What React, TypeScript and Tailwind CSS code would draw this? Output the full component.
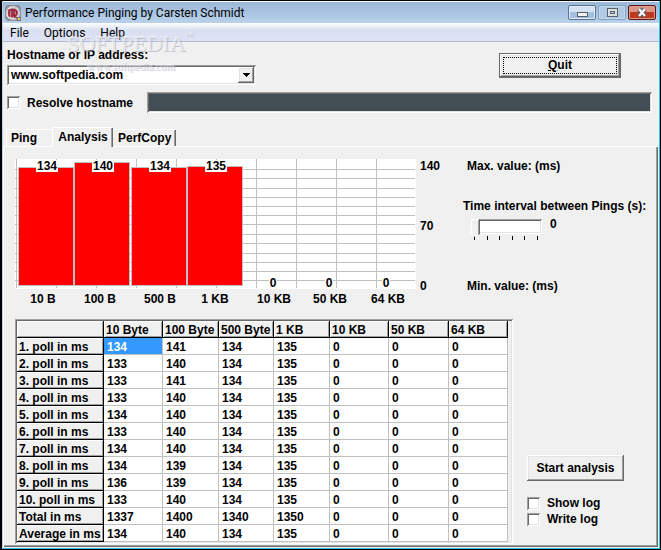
import React, { useState } from 'react';

const SUNKEN = 'shadow-[inset_1px_1px_#a0a0a0,inset_-1px_-1px_#fff,inset_2px_2px_#696969,inset_-2px_-2px_#e3e3e3]';
const RAISED = 'shadow-[inset_-1px_-1px_#696969,inset_1px_1px_#fff,inset_-2px_-2px_#a0a0a0,inset_2px_2px_#e3e3e3]';

const COLUMNS = ['10 Byte', '100 Byte', '500 Byte', '1 KB', '10 KB', '50 KB', '64 KB'];

const ROWS = [
  { label: '1. poll in ms', values: [134, 141, 134, 135, 0, 0, 0] },
  { label: '2. poll in ms', values: [133, 140, 134, 135, 0, 0, 0] },
  { label: '3. poll in ms', values: [133, 141, 134, 135, 0, 0, 0] },
  { label: '4. poll in ms', values: [133, 140, 134, 135, 0, 0, 0] },
  { label: '5. poll in ms', values: [134, 140, 134, 135, 0, 0, 0] },
  { label: '6. poll in ms', values: [133, 140, 134, 135, 0, 0, 0] },
  { label: '7. poll in ms', values: [134, 140, 134, 135, 0, 0, 0] },
  { label: '8. poll in ms', values: [134, 139, 134, 135, 0, 0, 0] },
  { label: '9. poll in ms', values: [136, 139, 134, 135, 0, 0, 0] },
  { label: '10. poll in ms', values: [133, 140, 134, 135, 0, 0, 0] },
  { label: 'Total in ms', values: [1337, 1400, 1340, 1350, 0, 0, 0] },
  { label: 'Average in ms', values: [134, 140, 134, 135, 0, 0, 0] },
];

const BARS = [
  { x: 3, top: 8, value: 134, valueX: 32, label: '10 B', labelX: 28 },
  { x: 59, top: 3, value: 140, valueX: 88, label: '100 B', labelX: 85 },
  { x: 116, top: 8, value: 134, valueX: 145, label: '500 B', labelX: 145 },
  { x: 172, top: 7, value: 135, valueX: 201, label: '1 KB', labelX: 200 },
  { x: 0, top: 0, value: 0, valueX: 258, label: '10 KB', labelX: 259 },
  { x: 0, top: 0, value: 0, valueX: 314, label: '50 KB', labelX: 315 },
  { x: 0, top: 0, value: 0, valueX: 371, label: '64 KB', labelX: 373 },
];

const GRID_X = [1, 41, 81, 121, 161, 201, 241, 281, 321, 361];
const GRID_Y = [10, 19, 29, 38, 47, 56, 65, 75, 84, 94, 103, 112, 121];

const AppIcon: React.FC = () => (
  <svg width="16" height="16" viewBox="0 0 16 16" className="shrink-0" aria-hidden="true">
    <rect width="16" height="16" rx="4" fill="#8d8f9a" />
    <circle cx="8" cy="8" r="7" fill="#d5d3d3" />
    <circle cx="8" cy="8" r="5" fill="#ad8b91" />
    <path d="M4 12V5h5q3 0 3 3t-3 2H7M7 4v8M9 5v6l3 2" fill="none" stroke="#a41c35" strokeWidth="1.5" />
    <path d="M3 4l3-2M2 10l2 3" stroke="#fff" strokeWidth="1" />
    <rect x="12" y="12" width="4" height="4" fill="#727680" />
    <rect x="13" y="13" width="2" height="2" fill="#eadc3c" />
  </svg>
);

const TitleBar: React.FC = () => (
  <header className="flex h-[22px] items-center bg-linear-to-b from-[#9bb8d8] to-[#b9d1ea] border-t border-white pl-0.5 pr-[3px]">
    <AppIcon />
    <h1 className="ml-1 grow pt-px font-[Roboto,'Noto_Sans',sans-serif] text-xs leading-4 text-black whitespace-nowrap">
      Performance Pinging by Carsten Schmidt
    </h1>
    <div className="flex gap-0.5">
      <button aria-label="Minimize" className="flex h-[15px] w-7 items-center justify-center rounded-[2px] border border-[#5b7392] bg-linear-to-b from-[#d3e1f2] from-50% to-[#a4bfdd] to-50% shadow-[inset_0_0_0_1px_#e0ecf8]">
        <svg width="12" height="11" viewBox="0 0 12 11" shapeRendering="crispEdges" aria-hidden="true">
          <rect x="1" y="5" width="11" height="5" fill="#565d6b" />
          <rect x="2" y="6" width="9" height="3" fill="#f3f3f3" />
        </svg>
      </button>
      <button aria-label="Maximize" className="flex h-[15px] w-7 items-center justify-center rounded-[2px] border border-[#86a1bf] bg-[#b0cae4] shadow-[inset_0_0_0_1px_#c3d8ed]">
        <svg width="12" height="11" viewBox="0 0 12 11" shapeRendering="crispEdges" aria-hidden="true">
          <rect x="1" y="1" width="11" height="9" fill="#59616f" />
          <rect x="2" y="2" width="9" height="7" fill="#dedede" />
          <rect x="4" y="4" width="5" height="3" fill="#59616f" />
          <rect x="5" y="5" width="3" height="1" fill="#b0cae4" />
        </svg>
      </button>
      <button aria-label="Close" className="flex h-[15px] w-7 items-center justify-center rounded-[2px] border border-[#5a1717] bg-linear-to-b from-[#dc9686] from-50% to-[#bd3a21] to-50% shadow-[inset_0_0_0_1px_#dd9c8d]">
        <svg width="12" height="11" viewBox="0 0 12 11" aria-hidden="true">
          <path d="M3 2l6 7M9 2L3 9" stroke="#545765" strokeWidth="4.4" />
          <path d="M3 2l6 7M9 2L3 9" stroke="#f7f7f7" strokeWidth="2.4" />
        </svg>
      </button>
    </div>
  </header>
);

const MenuBar: React.FC = () => (
  <nav className="flex h-[19px] items-end gap-[15px] border-b border-[#b2b8d2] bg-linear-to-b from-white via-[#d9dff0] via-40% to-[#dde3f5] pl-[7px] font-[Roboto,'Noto_Sans',sans-serif] text-xs leading-4">
    <button className="h-4">File</button>
    <button className="h-4">Options</button>
    <button className="h-4">Help</button>
  </nav>
);

const Watermark: React.FC = () => (
  <div aria-hidden="true" className="pointer-events-none absolute left-[67px] top-8 text-[#e2e3e8] opacity-60 [text-shadow:1px_1px_#a5a8b0,-1px_-1px_#f8f8fc]">
    <div className="flex items-start font-['Liberation_Serif',serif] leading-6">
      <span className="text-[22px]">SOFTPEDIA</span>
      <span className="text-[8px] leading-2">™</span>
    </div>
    <div className="pl-5 pt-0.5 font-['Liberation_Serif',serif] text-[11px] leading-4">www.softpedia.com</div>
  </div>
);

const CheckBox: React.FC<{ id: string; label: string }> = ({ id, label }) => {
  const [checked, setChecked] = useState(false);

  return (
    <div className="flex h-4 items-center">
      <input
        id={id}
        type="checkbox"
        checked={checked}
        onChange={e => setChecked(e.target.checked)}
        className={`size-[13px] shrink-0 appearance-none bg-white checked:bg-gray-500 ${SUNKEN}`}
      />
      <label htmlFor={id} className="pl-[7px] whitespace-nowrap">{label}</label>
    </div>
  );
};

const PollChart: React.FC = () => (
  <svg width="401" height="150" viewBox="0 0 401 150" className="shrink-0" role="img" aria-label="Average response by packet size">
    <g shapeRendering="crispEdges">
      <rect width="401" height="130" fill="#fff" />
      {GRID_X.map(x => <rect key={x} x={x} y="0" width="1" height="129" fill="#c0c0c0" />)}
      {GRID_Y.map(y => <rect key={y} x="0" y={y} width="400" height="1" fill="#c0c0c0" />)}
      {BARS.filter(bar => bar.value > 0).map(bar => (
        <g key={bar.label}>
          <rect x={bar.x} y={bar.top} width="56" height={127 - bar.top} fill="#c0c0c0" />
          <rect x={bar.x + 1} y={bar.top + 1} width="54" height={125 - bar.top} fill="#f00" />
        </g>
      ))}
      {BARS.map(bar => (
        <rect
          key={bar.label}
          x={bar.value ? bar.valueX - 11 : bar.valueX - 4}
          y={bar.value ? 1 : 118}
          width={bar.value ? 22 : 8}
          height={bar.value ? 12 : 11}
          fill="#fff"
        />
      ))}
    </g>
    <g textAnchor="middle" fill="#000">
      {BARS.map(bar => (
        <React.Fragment key={bar.label}>
          <text x={bar.valueX} y={bar.value ? 11 : 128}>{bar.value}</text>
          <text x={bar.labelX} y="144">{bar.label}</text>
        </React.Fragment>
      ))}
    </g>
  </svg>
);

const IntervalSlider: React.FC = () => {
  const [seconds, setSeconds] = useState(0);

  return (
    <div className="flex flex-col">
      <label htmlFor="interval" className="-ml-1 whitespace-nowrap">Time interval between Pings (s):</label>
      <div className="flex pl-1 pt-[3px]">
        <div className="w-[71px]">
          <input
            id="interval"
            type="range"
            min="0"
            max="5"
            value={seconds}
            onChange={e => setSeconds(Number(e.target.value))}
            className="block h-5 w-full appearance-none bg-transparent [&::-webkit-slider-runnable-track]:h-[15px] [&::-webkit-slider-runnable-track]:bg-white [&::-webkit-slider-runnable-track]:shadow-[inset_1px_1px_#a0a0a0,inset_-1px_-1px_#fff,inset_2px_2px_#696969,inset_-2px_-2px_#e3e3e3] [&::-webkit-slider-thumb]:h-[19px] [&::-webkit-slider-thumb]:w-[9px] [&::-webkit-slider-thumb]:appearance-none [&::-webkit-slider-thumb]:bg-[#f0f0f0] [&::-webkit-slider-thumb]:shadow-[inset_-1px_0_#696969,inset_1px_1px_#fff,inset_-2px_0_#a0a0a0] [&::-webkit-slider-thumb]:[clip-path:polygon(0_0,100%_0,100%_80%,50%_100%,0_80%)]"
          />
          <div className="flex justify-between pl-[3px] pr-1">
            {[0, 1, 2, 3, 4, 5].map(tick => <span key={tick} className="h-1 w-px bg-black" />)}
          </div>
        </div>
        <output htmlFor="interval" className="pl-2 pt-px">{seconds}</output>
      </div>
    </div>
  );
};

const ResultTable: React.FC = () => (
  <div className={`shrink-0 bg-[#f0f0f0] py-0.5 pl-0.5 pr-[5px] ${SUNKEN}`}>
    <table className="table-fixed w-[491px] border-separate border-spacing-0 bg-white text-left">
      <colgroup>
        <col className="w-[87px]" />
        <col className="w-[59px]" />
        <col className="w-[56px]" />
        <col className="w-[55px]" />
        <col className="w-[56px]" />
        <col className="w-[59px]" />
        <col className="w-[60px]" />
        <col className="w-[59px]" />
      </colgroup>
      <thead>
        <tr>
          <td className="h-[17px] border-b border-r border-black bg-[#f0f0f0] shadow-[inset_1px_1px_#fff,inset_-1px_-1px_#a0a0a0]" />
          {COLUMNS.map(column => (
            <th key={column} scope="col" className="h-[17px] border-b border-r border-black bg-[#f0f0f0] p-0 pl-0.5 pt-0.5 leading-[14px] whitespace-nowrap shadow-[inset_1px_1px_#fff,inset_-1px_-1px_#a0a0a0]">
              {column}
            </th>
          ))}
        </tr>
      </thead>
      <tbody>
        {ROWS.map((row, rowIndex) => (
          <tr key={row.label}>
            <th scope="row" className="h-[17px] border-b border-r border-black bg-[#f0f0f0] p-0 pl-0.5 pt-0.5 leading-[14px] whitespace-nowrap shadow-[inset_1px_1px_#fff,inset_-1px_-1px_#a0a0a0]">
              {row.label}
            </th>
            {row.values.map((value, index) => (
              <td
                key={COLUMNS[index]}
                className={`h-[17px] border-b border-r border-[#c0c0c0] p-0 pl-[3px] pt-0.5 leading-[14px] ${rowIndex === 0 && index === 0 ? 'bg-[#3399ff] text-white' : ''}`}
              >
                {value}
              </td>
            ))}
          </tr>
        ))}
      </tbody>
    </table>
  </div>
);

const App: React.FC = () => {
  const [host, setHost] = useState('www.softpedia.com');

  return (
    <div className="relative flex min-h-screen flex-col bg-black pb-px pl-0.5 pr-px pt-px">
      <div className="flex grow flex-col border-b border-l border-r border-b-[#2cc4e4] border-l-[#b9d1ea] border-r-[#2cc4e4] bg-[#f0f0f0] font-['Liberation_Sans',Arial,sans-serif] text-xs font-bold leading-4 text-black">
        <div className="font-normal">
          <TitleBar />
          <MenuBar />
        </div>

        <div className="flex items-start justify-between pl-1 pr-[38px] pt-[5px]">
          <div className="flex flex-col gap-0.5">
            <label htmlFor="host" className="h-4">Hostname or IP address:</label>
            <div className="relative w-[249px]">
              <select
                id="host"
                value={host}
                onChange={e => setHost(e.target.value)}
                className={`block h-5 w-full appearance-none bg-white pl-1 pr-5 leading-4 ${SUNKEN}`}
              >
                <option>www.softpedia.com</option>
              </select>
              <span className={`pointer-events-none absolute right-0.5 top-0.5 flex h-4 w-4 items-center justify-center bg-[#f0f0f0] ${RAISED}`}>
                <svg width="7" height="4" viewBox="0 0 7 4" shapeRendering="crispEdges" aria-hidden="true">
                  <path d="M0 0h7v1H0zM1 1h5v1H1zM2 2h3v1H2zM3 3h1v1H3z" />
                </svg>
              </span>
            </div>
          </div>
          <button className="mt-[6px] h-[25px] w-[122px] border border-[#696969] p-[3px] shadow-[inset_-1px_-1px_#696969,inset_1px_1px_#fff,inset_-2px_-2px_#a0a0a0,inset_2px_2px_#e3e3e3]">
            <span className="block h-full border border-dotted border-black leading-[15px]"><u>Q</u>uit</span>
          </button>
        </div>

        <div className="flex items-center gap-[14px] pl-1 pr-[7px] pt-[7px]">
          <CheckBox id="resolve" label="Resolve hostname" />
          <div className={`h-[21px] grow bg-[#434e54] ${SUNKEN}`} />
        </div>

        <div role="tablist" className="flex items-end pl-[3px] pt-[14px]">
          <button role="tab" aria-selected="false" className="h-[17px] w-[46px] border-l border-t border-white pl-1 text-left">Ping</button>
          <button role="tab" aria-selected="true" className="relative -mb-px h-5 w-[61px] border-l border-t border-white bg-[#f0f0f0] pb-0.5 shadow-[inset_-1px_0_#696969,inset_-2px_0_#a0a0a0]">Analysis</button>
          <button role="tab" aria-selected="false" className="h-[17px] w-[63px] border-t border-white pl-[5px] text-left shadow-[inset_-1px_0_#696969,inset_-2px_0_#a0a0a0]">PerfCopy</button>
        </div>

        <main role="tabpanel" className="mr-px mb-px grow border-l border-t border-white pb-0.5 pl-[11px] pr-1 pt-3 shadow-[inset_-1px_-1px_#696969,inset_-2px_-2px_#a0a0a0]">
          <div className="flex">
            <PollChart />
            <div className="flex h-[134px] w-[51px] flex-col justify-between pl-1 leading-[14px]">
              <span>140</span>
              <span>70</span>
              <span>0</span>
            </div>
            <div className="flex h-[134px] flex-col leading-[14px]">
              <span>Max. value: (ms)</span>
              <div className="grow pt-[26px]">
                <IntervalSlider />
              </div>
              <span>Min. value: (ms)</span>
            </div>
          </div>

          <div className="flex items-end gap-[14px] pt-[10px]">
            <ResultTable />
            <div className="flex flex-col pb-[17px]">
              <button className={`h-[26px] w-[97px] ${RAISED}`}>Start analysis</button>
              <div className="pt-[14px]">
                <CheckBox id="show-log" label="Show log" />
                <CheckBox id="write-log" label="Write log" />
              </div>
            </div>
          </div>
        </main>
      </div>
      <Watermark />
    </div>
  );
};

export default App;
